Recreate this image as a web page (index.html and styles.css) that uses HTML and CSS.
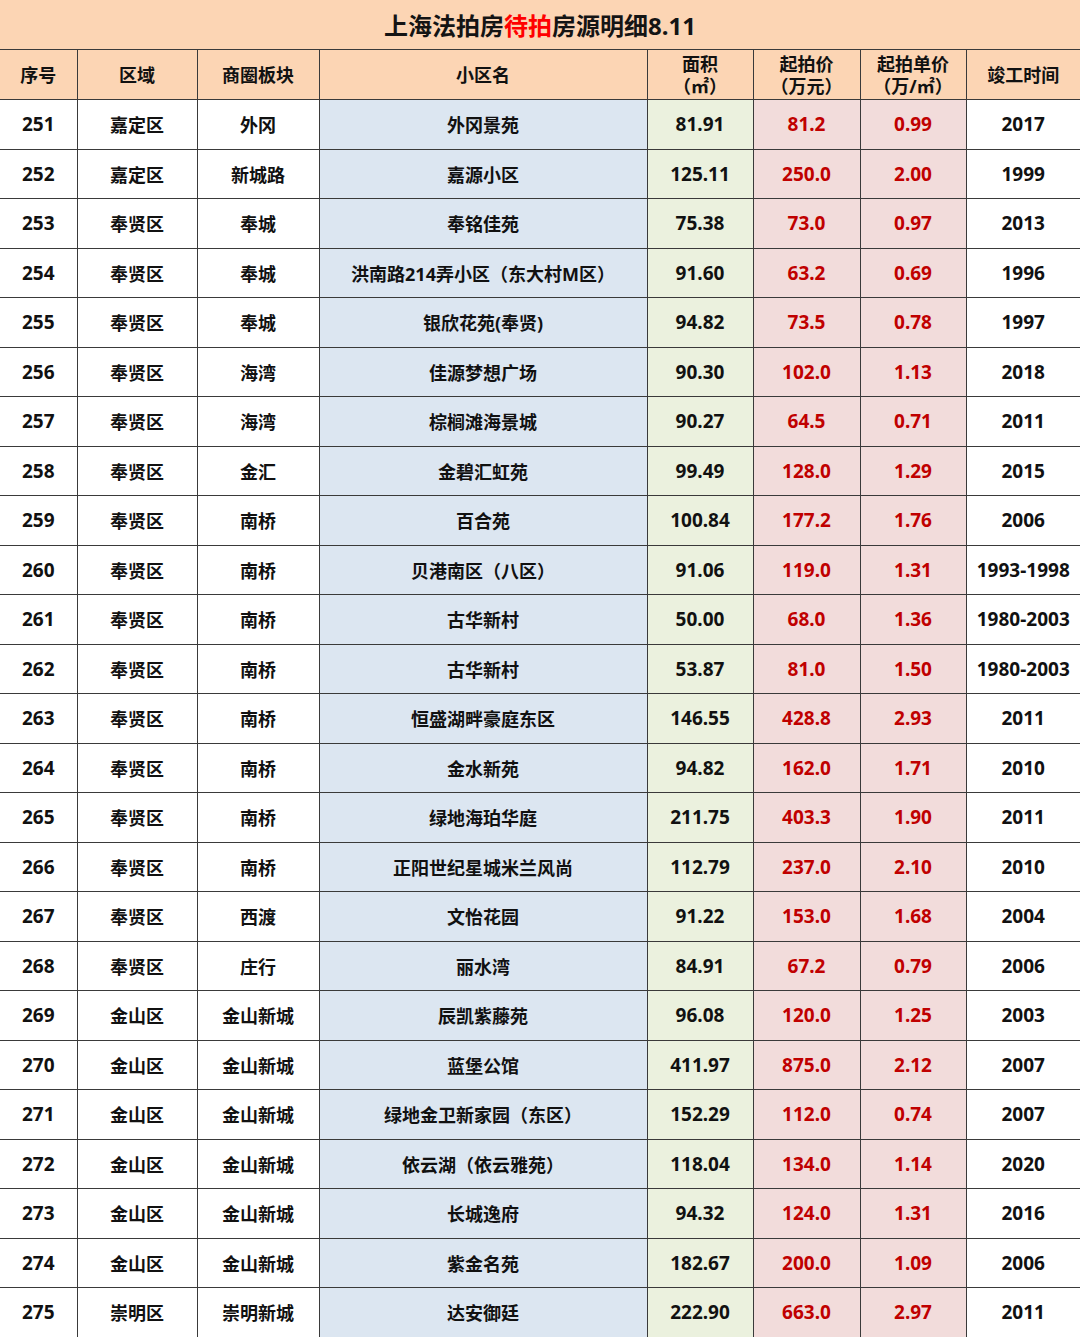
FILE: index.html
```html
<!DOCTYPE html>
<html lang="zh">
<head>
<meta charset="utf-8">
<title>上海法拍房待拍房源明细8.11</title>
<link rel="stylesheet" href="styles.css">
</head>
<body>
<div class="sheet">
  <div class="title">上海法拍房<span class="red">待拍</span>房源明细8.11</div>
  <table class="grid">
    <colgroup>
      <col class="c1"><col class="c2"><col class="c3"><col class="c4"><col class="c5"><col class="c6"><col class="c7"><col class="c8">
    </colgroup>
    <thead>
      <tr>
        <th>序号</th><th>区域</th><th>商圈板块</th><th>小区名</th>
        <th>面积<br>（㎡）</th><th>起拍价<br>（万元）</th><th>起拍单价<br>（万/㎡）</th><th>竣工时间</th>
      </tr>
    </thead>
    <tbody>
      <tr><td>251</td><td class="cn">嘉定区</td><td class="cn">外冈</td><td class="name">外冈景苑</td><td class="area">81.91</td><td class="price">81.2</td><td class="price">0.99</td><td>2017</td></tr>
      <tr><td>252</td><td class="cn">嘉定区</td><td class="cn">新城路</td><td class="name">嘉源小区</td><td class="area">125.11</td><td class="price">250.0</td><td class="price">2.00</td><td>1999</td></tr>
      <tr><td>253</td><td class="cn">奉贤区</td><td class="cn">奉城</td><td class="name">奉铭佳苑</td><td class="area">75.38</td><td class="price">73.0</td><td class="price">0.97</td><td>2013</td></tr>
      <tr><td>254</td><td class="cn">奉贤区</td><td class="cn">奉城</td><td class="name">洪南路214弄小区（东大村M区）</td><td class="area">91.60</td><td class="price">63.2</td><td class="price">0.69</td><td>1996</td></tr>
      <tr><td>255</td><td class="cn">奉贤区</td><td class="cn">奉城</td><td class="name">银欣花苑(奉贤)</td><td class="area">94.82</td><td class="price">73.5</td><td class="price">0.78</td><td>1997</td></tr>
      <tr><td>256</td><td class="cn">奉贤区</td><td class="cn">海湾</td><td class="name">佳源梦想广场</td><td class="area">90.30</td><td class="price">102.0</td><td class="price">1.13</td><td>2018</td></tr>
      <tr><td>257</td><td class="cn">奉贤区</td><td class="cn">海湾</td><td class="name">棕榈滩海景城</td><td class="area">90.27</td><td class="price">64.5</td><td class="price">0.71</td><td>2011</td></tr>
      <tr><td>258</td><td class="cn">奉贤区</td><td class="cn">金汇</td><td class="name">金碧汇虹苑</td><td class="area">99.49</td><td class="price">128.0</td><td class="price">1.29</td><td>2015</td></tr>
      <tr><td>259</td><td class="cn">奉贤区</td><td class="cn">南桥</td><td class="name">百合苑</td><td class="area">100.84</td><td class="price">177.2</td><td class="price">1.76</td><td>2006</td></tr>
      <tr><td>260</td><td class="cn">奉贤区</td><td class="cn">南桥</td><td class="name">贝港南区（八区）</td><td class="area">91.06</td><td class="price">119.0</td><td class="price">1.31</td><td>1993-1998</td></tr>
      <tr><td>261</td><td class="cn">奉贤区</td><td class="cn">南桥</td><td class="name">古华新村</td><td class="area">50.00</td><td class="price">68.0</td><td class="price">1.36</td><td>1980-2003</td></tr>
      <tr><td>262</td><td class="cn">奉贤区</td><td class="cn">南桥</td><td class="name">古华新村</td><td class="area">53.87</td><td class="price">81.0</td><td class="price">1.50</td><td>1980-2003</td></tr>
      <tr><td>263</td><td class="cn">奉贤区</td><td class="cn">南桥</td><td class="name">恒盛湖畔豪庭东区</td><td class="area">146.55</td><td class="price">428.8</td><td class="price">2.93</td><td>2011</td></tr>
      <tr><td>264</td><td class="cn">奉贤区</td><td class="cn">南桥</td><td class="name">金水新苑</td><td class="area">94.82</td><td class="price">162.0</td><td class="price">1.71</td><td>2010</td></tr>
      <tr><td>265</td><td class="cn">奉贤区</td><td class="cn">南桥</td><td class="name">绿地海珀华庭</td><td class="area">211.75</td><td class="price">403.3</td><td class="price">1.90</td><td>2011</td></tr>
      <tr><td>266</td><td class="cn">奉贤区</td><td class="cn">南桥</td><td class="name">正阳世纪星城米兰风尚</td><td class="area">112.79</td><td class="price">237.0</td><td class="price">2.10</td><td>2010</td></tr>
      <tr><td>267</td><td class="cn">奉贤区</td><td class="cn">西渡</td><td class="name">文怡花园</td><td class="area">91.22</td><td class="price">153.0</td><td class="price">1.68</td><td>2004</td></tr>
      <tr><td>268</td><td class="cn">奉贤区</td><td class="cn">庄行</td><td class="name">丽水湾</td><td class="area">84.91</td><td class="price">67.2</td><td class="price">0.79</td><td>2006</td></tr>
      <tr><td>269</td><td class="cn">金山区</td><td class="cn">金山新城</td><td class="name">辰凯紫藤苑</td><td class="area">96.08</td><td class="price">120.0</td><td class="price">1.25</td><td>2003</td></tr>
      <tr><td>270</td><td class="cn">金山区</td><td class="cn">金山新城</td><td class="name">蓝堡公馆</td><td class="area">411.97</td><td class="price">875.0</td><td class="price">2.12</td><td>2007</td></tr>
      <tr><td>271</td><td class="cn">金山区</td><td class="cn">金山新城</td><td class="name">绿地金卫新家园（东区）</td><td class="area">152.29</td><td class="price">112.0</td><td class="price">0.74</td><td>2007</td></tr>
      <tr><td>272</td><td class="cn">金山区</td><td class="cn">金山新城</td><td class="name">依云湖（依云雅苑）</td><td class="area">118.04</td><td class="price">134.0</td><td class="price">1.14</td><td>2020</td></tr>
      <tr><td>273</td><td class="cn">金山区</td><td class="cn">金山新城</td><td class="name">长城逸府</td><td class="area">94.32</td><td class="price">124.0</td><td class="price">1.31</td><td>2016</td></tr>
      <tr><td>274</td><td class="cn">金山区</td><td class="cn">金山新城</td><td class="name">紫金名苑</td><td class="area">182.67</td><td class="price">200.0</td><td class="price">1.09</td><td>2006</td></tr>
      <tr><td>275</td><td class="cn">崇明区</td><td class="cn">崇明新城</td><td class="name">达安御廷</td><td class="area">222.90</td><td class="price">663.0</td><td class="price">2.97</td><td>2011</td></tr>
    </tbody>
  </table>
</div>
</body>
</html>
```
FILE: styles.css
```css
html, body {
  margin: 0;
  padding: 0;
  background: #ffffff;
}
body {
  font-family: "Noto Sans", "Noto Sans CJK SC", sans-serif;
  font-weight: 700;
  color: #111111;
}
.sheet {
  width: 1080px;
}
.title {
  height: 49px;
  background: #fcd5b4;
  display: flex;
  align-items: center;
  justify-content: center;
  font-size: 24px;
  font-weight: 700;
  color: #141414;
}
.red {
  color: #ff0000;
}
.grid {
  width: 1080px;
  border-collapse: collapse;
  table-layout: fixed;
}
.c1 { width: 77px; }
.c2 { width: 120px; }
.c3 { width: 122px; }
.c4 { width: 328px; }
.c5 { width: 106px; }
.c6 { width: 107px; }
.c7 { width: 106px; }
.c8 { width: 114px; }
.grid th, .grid td {
  border: 1px solid #3a3a3a;
  text-align: center;
  vertical-align: middle;
  padding: 0;
  white-space: nowrap;
}
.grid th {
  background: #fcd5b4;
  height: 49px;
  font-size: 18px;
  line-height: 22px;
  font-weight: 700;
}
.grid td {
  height: 48.5px;
  font-size: 19px;
  background: #ffffff;
}
.grid td.cn { font-size: 18px; }
.grid tr > :first-child { border-left: none; }
.grid tr > :last-child { border-right: none; }
.grid td.name { background: #dce6f1; font-size: 18px; }
.grid td.area { background: #ebf1de; }
.grid td.price { background: #f2dcdb; color: #c00000; }
```
